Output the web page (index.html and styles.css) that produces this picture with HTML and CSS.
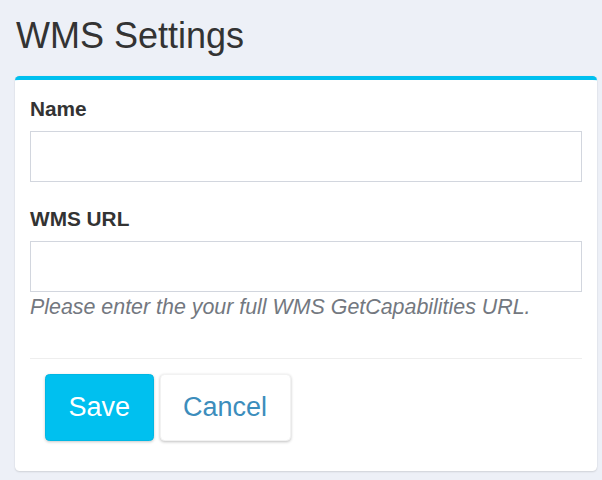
FILE: index.html
```html
<!DOCTYPE html>
<html>
<head>
<meta charset="utf-8">
<link rel="stylesheet" href="styles.css">
</head>
<body>
  <h1 class="page-title">WMS Settings</h1>
  <div class="card">
    <form class="card-body">
      <div class="form-group">
        <label class="field-label" for="name">Name</label>
        <input class="field-input" id="name" type="text">
      </div>
      <div class="form-group last">
        <label class="field-label" for="url">WMS URL</label>
        <input class="field-input" id="url" type="text">
        <p class="help-text">Please enter the your full WMS GetCapabilities URL.</p>
      </div>
      <hr class="divider">
      <div class="actions">
        <button type="button" class="btn btn-primary">Save</button>
        <button type="button" class="btn btn-default">Cancel</button>
      </div>
    </form>
  </div>
</body>
</html>
```
FILE: styles.css
```css
html, body {
  margin: 0;
  padding: 0;
}
body {
  background: #edf0f7;
  font-family: "Liberation Sans", Arial, sans-serif;
  font-size: 21px;
  line-height: 30px;
  color: #333;
  width: 602px;
  height: 480px;
  overflow: hidden;
}
.page-title {
  margin: 0;
  padding: 16px 0 0 16px;
  font-size: 36px;
  line-height: 39px;
  font-weight: normal;
  color: #333;
  height: 62px;
  box-sizing: border-box;
}
.card {
  margin: 14px 0 0 15px;
  width: 582px;
  background: #fff;
  border-top: 4.5px solid #00c0ef;
  border-radius: 4.5px;
  box-shadow: 0 1px 2px rgba(0, 0, 0, 0.12), 0 0 1px rgba(0, 0, 0, 0.08);
}
.card-body {
  display: block;
  margin: 0;
  padding: 14px 15px 15px;
}
.form-group {
  margin-bottom: 22px;
}
.form-group.last {
  margin-bottom: 0;
}
.field-label {
  display: block;
  font-weight: bold;
  font-size: 20.8px;
  line-height: 30px;
  margin-bottom: 7px;
  color: #333;
}
.field-input {
  display: block;
  box-sizing: border-box;
  width: 100%;
  height: 51px;
  margin: 0;
  padding: 9px 18px;
  border: 1px solid #d2d6de;
  border-radius: 0;
  background: #fff;
  font: inherit;
  outline: none;
}
.help-text {
  margin: 0;
  font-style: italic;
  font-size: 21.4px;
  line-height: 30px;
  color: #737880;
}
.divider {
  margin: 36px 0 15px;
  border: 0;
  border-top: 1px solid #eeeeee;
  height: 0;
}
.actions {
  display: flex;
  gap: 6px;
  padding: 0 15px 15px;
}
.btn {
  font-family: "Liberation Sans", Arial, sans-serif;
  font-size: 27px;
  line-height: 35px;
  padding: 15px 22.5px;
  border-radius: 4.5px;
  border: 1px solid transparent;
  cursor: pointer;
  margin: 0;
}
.btn-primary {
  background: #00c0ef;
  border-color: #00b7e4;
  color: #fff;
  box-shadow: 0 1px 3px rgba(0, 0, 0, 0.22);
}
.btn-default {
  background: #fff;
  border-color: #f2f2f2;
  color: #3c8dbc;
  box-shadow: 0 1px 3px rgba(0, 0, 0, 0.25);
}
```
